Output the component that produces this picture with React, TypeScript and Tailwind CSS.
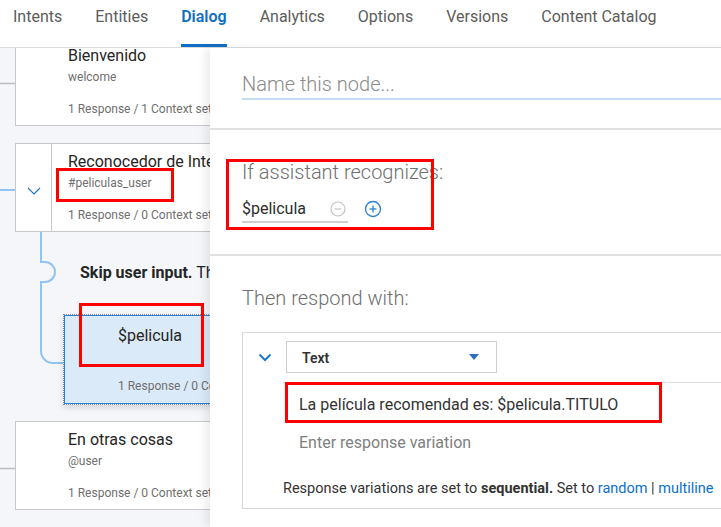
import React from 'react'

const tabs = ['Intents', 'Entities', 'Dialog', 'Analytics', 'Options', 'Versions', 'Content Catalog']

function Node({
  title,
  sub,
  footer,
  chevron,
  className,
}: {
  title: string
  sub: string
  footer: string
  chevron?: boolean
  className?: string
}) {
  return (
    <div className={`flex w-[300px] h-[89px] bg-white border border-[#c8c8c8] ${className ?? ''}`}>
      <div className={`w-[36px] flex items-center justify-center shrink-0 ${chevron ? 'border-r border-[#c8c8c8]' : ''}`}>
        {chevron && (
          <svg width="14" height="8" viewBox="0 0 14 8" className="mt-[6px]">
            <polyline points="1,1 7,7 13,1" fill="none" stroke="#1f78d1" strokeWidth="1.2" />
          </svg>
        )}
      </div>
      <div className="pl-[16px] pt-[6px] whitespace-nowrap">
        <div className="text-[16px] leading-[24px] text-[#252525]">{title}</div>
        <div className="mt-[1px] text-[12px] leading-[16px] text-[#6f6f6f]">{sub}</div>
        <div className="mt-[16px] text-[12px] leading-[16px] text-[#6f6f6f]">{footer}</div>
      </div>
    </div>
  )
}

function Connectors() {
  return (
    <svg className="absolute inset-0 pointer-events-none" width="210" height="479" viewBox="0 0 210 479">
      <line x1="0" y1="35.5" x2="15" y2="35.5" stroke="#bdbdbd" strokeWidth="1.5" />
      <line x1="0" y1="142" x2="15" y2="142" stroke="#92c4f2" strokeWidth="2" />
      <path
        d="M41 183 V214 H45 A10 10 0 0 1 45 234 H41 V303 A12 12 0 0 0 53 315 H63"
        fill="none"
        stroke="#92c4f2"
        strokeWidth="2"
      />
      <line x1="0" y1="420.5" x2="15" y2="420.5" stroke="#bdbdbd" strokeWidth="1.5" />
    </svg>
  )
}

export default function App() {
  return (
    <div className="relative w-[721px] h-[527px] overflow-hidden bg-white font-['Roboto',sans-serif]">
      {/* Tabs */}
      <nav className="h-[48px] flex gap-[33px] pl-[13px] border-b border-[#dcdcdc]">
        {tabs.map((t) => (
          <div
            key={t}
            className={`h-[47px] pt-[5px] border-b-[3px] text-[16px] leading-[24px] whitespace-nowrap ${
              t === 'Dialog' ? 'border-[#0f6fc6] text-[#0f6fc6] font-semibold' : 'border-transparent text-[#5c5c5c]'
            }`}
          >
            {t}
          </div>
        ))}
      </nav>

      <div className="flex h-[479px]">
        {/* Canvas */}
        <div className="relative w-[210px] shrink-0 overflow-hidden bg-[#f4f6fa]">
          <Connectors />
          <div className="relative">
            <Node
              className="ml-[15px] -mt-[11px]"
              title="Bienvenido"
              sub="welcome"
              footer="1 Response / 1 Context set"
            />
            <Node
              className="ml-[15px] mt-[17px]"
              chevron
              title="Reconocedor de Intenciones"
              sub="#peliculas_user"
              footer="1 Response / 0 Context set"
            />
            <div className="ml-[80px] mt-[31px] text-[16px] leading-[20px] text-[#252525] whitespace-nowrap">
              <span className="font-bold">Skip user input.</span> Then
            </div>
            <div className="ml-[63px] mt-[31px] w-[300px] h-[91px] border border-dotted border-[#8a8a8a] shadow-[0_3px_6px_rgba(0,0,0,0.12)]">
              <div className="h-full border border-[#2a82d6] bg-[#dbeaf8] pl-[53px] pt-[8px] whitespace-nowrap">
                <div className="text-[16px] leading-[24px] text-[#252525]">$pelicula</div>
                <div className="mt-[30px] text-[12px] leading-[16px] text-[#6f6f6f]">1 Response / 0 Context set</div>
              </div>
            </div>
            <Node
              className="ml-[15px] mt-[16px]"
              title="En otras cosas"
              sub="@user"
              footer="1 Response / 0 Context set"
            />
          </div>
        </div>

        {/* Node editor panel */}
        <div className="relative z-10 flex-1 bg-white shadow-[-5px_0_8px_rgba(0,0,0,0.07)]">
          <div className="h-[82px] pl-[32px] pt-[22px] border-b-2 border-[#e0e0e0]">
            <div className="border-b-2 border-[#c3dbf3] text-[20px] leading-[28px] font-light text-[#8a8a8a]">
              Name this node...
            </div>
          </div>

          <div className="h-[126px] pl-[32px] pt-[28px] border-b-2 border-[#e0e0e0]">
            <div className="text-[20px] leading-[28px] font-light text-[#6f6f6f]">If assistant recognizes:</div>
            <div className="mt-[11px] flex items-center">
              <div className="w-[106px] flex items-center justify-between border-b-2 border-[#d0d0d0] pr-[2px]">
                <span className="text-[16px] leading-[24px] text-[#2d2d2d]">$pelicula</span>
                <svg width="16" height="16" viewBox="0 0 16 16">
                  <circle cx="8" cy="8" r="7" fill="none" stroke="#c4c4c4" strokeWidth="1.2" />
                  <line x1="4.5" y1="8" x2="11.5" y2="8" stroke="#c4c4c4" strokeWidth="1.2" />
                </svg>
              </div>
              <svg width="18" height="18" viewBox="0 0 18 18" className="ml-[16px] -mt-[2px]">
                <circle cx="9" cy="9" r="7.5" fill="none" stroke="#2a7fd0" strokeWidth="1.3" />
                <line x1="5.5" y1="9" x2="12.5" y2="9" stroke="#2a7fd0" strokeWidth="1.3" />
                <line x1="9" y1="5.5" x2="9" y2="12.5" stroke="#2a7fd0" strokeWidth="1.3" />
              </svg>
            </div>
          </div>

          <div className="pl-[32px] pt-[28px]">
            <div className="text-[20px] leading-[28px] font-light text-[#6f6f6f]">Then respond with:</div>
            <div className="mt-[20px] w-[520px] h-[177px] border border-[#d8d8d8]">
              <div className="flex pt-[8px]">
                <div className="w-[43px] h-[32px] flex items-center justify-center">
                  <svg width="14" height="9" viewBox="0 0 14 9">
                    <polyline points="1.5,1.5 7,7 12.5,1.5" fill="none" stroke="#1f78d1" strokeWidth="2" />
                  </svg>
                </div>
                <div className="relative w-[211px] h-[32px] border border-[#cfcfcf] flex items-center pl-[15px] pt-[2px] text-[14px] font-semibold text-[#333]">
                  Text
                  <svg width="10" height="6" viewBox="0 0 10 6" className="absolute right-[17px] top-[12px]">
                    <polygon points="0,0 10,0 5,6" fill="#2f6fba" />
                  </svg>
                </div>
              </div>
              <div className="ml-[40px] mt-[9px] border-t border-[#e0e0e0] pl-[16px] pt-[10px]">
                <div className="text-[16px] leading-[24px] text-[#333]">La película recomendad es: $pelicula.TITULO</div>
                <div className="mt-[14px] text-[16px] leading-[24px] text-[#808080]">Enter response variation</div>
              </div>
              <div className="ml-[40px] mt-[24px] text-[14.5px] leading-[20px] text-[#333] whitespace-nowrap">
                Response variations are set to <span className="font-bold">sequential.</span> Set to{' '}
                <span className="text-[#0f6fc6]">random</span> | <span className="text-[#0f6fc6]">multiline</span>
              </div>
            </div>
          </div>
        </div>
      </div>

      {/* Red annotation boxes */}
      <div className="absolute left-[56px] top-[168px] w-[118px] h-[34px] border-[3px] border-[#ff0000] z-20" />
      <div className="absolute left-[79px] top-[303px] w-[125px] h-[64px] border-[3px] border-[#ff0000] z-20" />
      <div className="absolute left-[226px] top-[159px] w-[208px] h-[71px] border-[3px] border-[#ff0000] z-20" />
      <div className="absolute left-[285px] top-[382px] w-[377px] h-[41px] border-[3px] border-[#ff0000] z-20" />
    </div>
  )
}
